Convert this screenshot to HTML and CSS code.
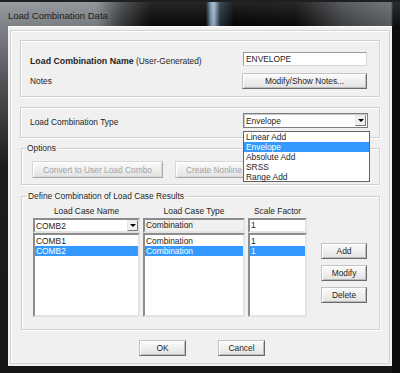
FILE: index.html
```html
<!DOCTYPE html>
<html lang="en">

<head>
    <title>Load Combination Data</title>
    <meta charset="UTF-8">
    <meta name="viewport" content="width=device-width, initial-scale=1">

    <link rel="stylesheet" href="styles.css">
</head>

<body>
    <div class="window">
        <div class="titlebar"><span class="title">Load Combination Data</span></div>
        <div class="frame">
            <div class="client">
                <div class="dialog">

                    <div class="box box-name">
                        <div class="row">
                            <span class="label label-name"><b>Load Combination Name</b> (User-Generated)</span>
                            <div class="textbox name-input">ENVELOPE</div>
                        </div>
                        <div class="row row-notes">
                            <span class="label">Notes</span>
                            <button class="btn notes-btn">Modify/Show Notes...</button>
                        </div>
                    </div>

                    <div class="box box-type">
                        <div class="row">
                            <span class="label label-type">Load Combination Type</span>
                            <div class="combo type-combo">
                                <span class="combo-text">Envelope</span>
                                <span class="combo-arrow"><i></i></span>
                                <ul class="droplist">
                                    <li>Linear Add</li>
                                    <li class="sel">Envelope</li>
                                    <li>Absolute Add</li>
                                    <li>SRSS</li>
                                    <li>Range Add</li>
                                </ul>
                            </div>
                        </div>
                    </div>

                    <fieldset class="group options">
                        <legend>Options</legend>
                        <div class="opt-buttons">
                            <button class="btn disabled">Convert to User Load Combo</button>
                            <!-- the open drop list covers the rest of this caption -->
                            <button class="btn disabled nonlin-btn" title="Create Nonlinear Load Case"><span>Create Nonline</span></button>
                        </div>
                    </fieldset>

                    <fieldset class="group define">
                        <legend>Define Combination of Load Case Results</legend>
                        <div class="define-body">
                            <div class="col col-name">
                                <div class="col-head">Load Case Name</div>
                                <div class="combo sunken case-combo">
                                    <span class="combo-text">COMB2</span>
                                    <span class="combo-arrow"><i></i></span>
                                </div>
                                <ul class="listbox">
                                    <li>COMB1</li>
                                    <li class="sel">COMB2</li>
                                </ul>
                            </div>
                            <div class="col col-type">
                                <div class="col-head">Load Case Type</div>
                                <div class="field sunken readonly">Combination</div>
                                <ul class="listbox">
                                    <li>Combination</li>
                                    <li class="sel">Combination</li>
                                </ul>
                            </div>
                            <div class="col col-scale">
                                <div class="col-head">Scale Factor</div>
                                <div class="field sunken">1</div>
                                <ul class="listbox">
                                    <li>1</li>
                                    <li class="sel">1</li>
                                </ul>
                            </div>
                            <div class="side-buttons">
                                <button class="btn">Add</button>
                                <button class="btn">Modify</button>
                                <button class="btn">Delete</button>
                            </div>
                        </div>
                    </fieldset>

                    <div class="footer">
                        <button class="btn">OK</button>
                        <button class="btn">Cancel</button>
                    </div>

                </div>
            </div>
        </div>
    </div>
</body>

</html>
```

FILE: styles.css
```css
* {
    box-sizing: border-box;
}

body {
    margin: 0;
    background: #000;
    font-family: "Liberation Sans", Arial, sans-serif;
    font-size: 8.4px;
    color: #1e1e1e;
}

.window {
    width: 400px;
    height: 373px;
    display: flex;
    flex-direction: column;
}

/* title bar */
.titlebar {
    height: 26px;
    border-top: 2px solid #1e1f20;
    padding: 2px 0 0 8px;
    display: flex;
    align-items: center;
    background:
        linear-gradient(to bottom, rgba(255, 255, 255, .12), rgba(0, 0, 0, .10)),
        linear-gradient(to right, #8c9095 0, #858a8f 96px, #3a3c3e 122px, #0a0a0a 150px,
            #090909 206px, #7c9cbc 211px, #a3bbd2 214px, #22303d 220px, #040404 234px,
            #0a0a0a 296px, #45484b 345px, #606468 391px, #101010 393px);
}

.title {
    font-size: 9.5px;
    color: #1c1c1c;
}

/* window frame round the client area */
.frame {
    flex: 1;
    display: flex;
    padding: 0 8px 7px;
    background:
        linear-gradient(to right, transparent 392px, #0c0c0c 392px),
        linear-gradient(to bottom, #80848a 0, #4d5053 60px, #1c1d1e 140px, #151515 100%);
}

.client {
    flex: 1;
    display: flex;
    background: #f0f0f0;
    padding: 4px 2px 2px;
    box-shadow: inset 0 1px 0 #fff;
}

.dialog {
    flex: 1;
    display: flex;
    flex-direction: column;
    border: 1px solid #d3d3d3;
    box-shadow: inset 1px 1px 0 #fff;
    padding: 9px 9px 0;
}

/* plain boxes */
.box {
    border: 1px solid #cfcfcf;
    box-shadow: 1px 1px 0 #fff, inset 1px 1px 0 #fff;
}

.box-name {
    height: 57px;
    padding: 11px 12px 0 9px;
}

.box-type {
    height: 31px;
    margin-top: 10px;
    padding: 5px 11px 0 9px;
}

.row {
    display: flex;
    justify-content: space-between;
    align-items: center;
}

.row-notes {
    margin-top: 7px;
}

.label-name {
    position: relative;
    top: 2px;
}

.label-name b {
    font-size: 8.8px;
}

.label-type {
    position: relative;
    top: 1px;
}

.textbox {
    width: 124px;
    height: 14px;
    line-height: 12px;
    padding-left: 2px;
    background: #fff;
    border: 1px solid #9a9a9a;
    border-bottom-color: #d8d8d8;
    border-right-color: #d8d8d8;
}

/* buttons */
.btn {
    height: 16px;
    padding: 0;
    font: inherit;
    color: #1e1e1e;
    background: linear-gradient(#fbfbfb, #efefef 50%, #e2e2e2);
    border: 1px solid;
    border-color: #c2c2c2 #6a6a6a #6a6a6a #c2c2c2;
    box-shadow: inset 1px 1px 0 #fff, inset -1px -1px 0 #bdbdbd;
}

.btn.disabled {
    color: #a3a3a3;
    border-color: #d6d6d6 #ababab #ababab #d6d6d6;
    box-shadow: inset 1px 1px 0 #fff, inset -1px -1px 0 #d8d8d8;
}

.notes-btn {
    width: 125px;
}

/* combo boxes */
.combo {
    position: relative;
    display: flex;
    align-items: center;
    background: #fff;
}

.type-combo {
    width: 125px;
    height: 15px;
    border: 1px solid #7d7d7d;
    box-shadow: inset 1px 1px 0 #c9c9c9;
    padding: 0 0 0 2px;
}

.combo-text {
    flex: 1;
}

.combo-arrow {
    width: 11px;
    height: 11px;
    margin-right: 1px;
    display: flex;
    align-items: center;
    justify-content: center;
    background: #f0f0f0;
    border: 1px solid;
    border-color: #e8e8e8 #7a7a7a #7a7a7a #e8e8e8;
}

.combo-arrow i {
    border-left: 3px solid transparent;
    border-right: 3px solid transparent;
    border-top: 3px solid #000;
}

.droplist {
    position: absolute;
    top: 17px;
    left: -1px;
    width: 127px;
    height: 51px;
    margin: 0;
    padding: 0;
    list-style: none;
    background: #fff;
    border: 1px solid #646464;
    z-index: 2;
}

.droplist li {
    height: 10px;
    line-height: 10px;
    padding-left: 2px;
}

.sel {
    background: #3399ff;
    color: #fff;
}

/* group boxes */
.group {
    margin: 5px 0 0 1px;
    border: 1px solid #cfcfcf;
    box-shadow: 1px 1px 0 #fff, inset 1px 1px 0 #fff;
    min-width: 0;
}

.group legend {
    padding: 0 1px;
    margin-left: -6px;
    line-height: 10px;
}

.options {
    padding: 8px 10px 6px;
}

.opt-buttons {
    display: flex;
    gap: 12px;
}

.opt-buttons .btn {
    width: 131px;
    height: 17px;
}

.nonlin-btn {
    display: flex;
    align-items: center;
    padding-left: 10px;
}

.define {
    margin-top: 6px;
    padding: 5px 12px 12px 11px;
}

.define-body {
    display: flex;
    align-items: flex-start;
}

.col {
    display: flex;
    flex-direction: column;
}

.col-name {
    width: 107px;
}

.col-type {
    width: 102px;
    margin-left: 3px;
}

.col-scale {
    width: 59px;
    margin-left: 3px;
}

.col-head {
    height: 10px;
    line-height: 10px;
    margin-bottom: 2px;
    text-align: center;
}

.sunken {
    height: 15px;
    border: 2px solid;
    border-color: #8c8c8c #e4e4e4 #e4e4e4 #8c8c8c;
}

.case-combo {
    padding-left: 1px;
}

.case-combo .combo-arrow {
    margin-right: 0;
}

.field {
    line-height: 11px;
    padding-left: 1px;
    background: #fff;
}

.field.readonly {
    background: #f0f0f0;
}

.listbox {
    height: 84px;
    margin: 0;
    padding: 1px 0 0;
    list-style: none;
    background: #fff;
    border: 2px solid;
    border-color: #8c8c8c #e4e4e4 #e4e4e4 #8c8c8c;
}

.listbox li {
    height: 10px;
    line-height: 10px;
    padding-left: 1px;
}

.side-buttons {
    margin: 37px 0 0 14px;
    display: flex;
    flex-direction: column;
    gap: 6px;
}

.side-buttons .btn {
    width: 46px;
}

.footer {
    margin-top: 10px;
    padding-left: 4px;
    display: flex;
    justify-content: center;
    gap: 32px;
}

.footer .btn {
    width: 47px;
}
```
